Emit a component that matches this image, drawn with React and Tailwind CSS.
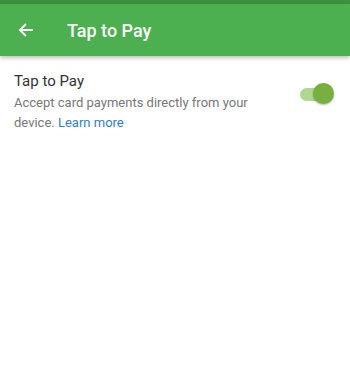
export default function App() {
  return (
    <div className="w-[350px] h-[377px] bg-white" style={{ fontFamily: "Roboto, 'Noto Sans', sans-serif" }}>
      <div className="h-[4px] bg-[#3d8f40]" />
      <div className="h-[52px] bg-[#4caf50] flex items-center shadow-[0_2px_4px_rgba(0,0,0,0.25)] relative">
        <div className="w-[67px] pl-[17px] flex items-center">
          <svg width="18" height="18" viewBox="0 0 24 24" fill="none">
            <path d="M20 12H4.5M11 5l-7 7 7 7" stroke="white" strokeWidth="2.6" strokeLinecap="square" />
          </svg>
        </div>
        <span className="text-white text-[18px] font-medium">Tap to Pay</span>
      </div>
      <div className="flex items-start pl-[14px] pr-[16px] pt-[15px]">
        <div className="flex-1">
          <div className="text-[15px] leading-[20px] text-[#333]">Tap to Pay</div>
          <div className="text-[13px] leading-[20px] text-[#777] mt-[2px]">
            Accept card payments directly from your device. <span className="text-[#2f7ed8]">Learn more</span>
          </div>
        </div>
        <div className="relative w-[36px] h-[22px] mt-[12px] ml-[10px]">
          <div className="absolute left-[2px] top-[5px] w-[32px] h-[13px] rounded-full bg-[#b0d68f]" />
          <div className="absolute right-0 top-0 w-[21px] h-[21px] rounded-full bg-[#77b041] shadow-[0_1px_2px_rgba(0,0,0,0.3)]" />
        </div>
      </div>
    </div>
  );
}
